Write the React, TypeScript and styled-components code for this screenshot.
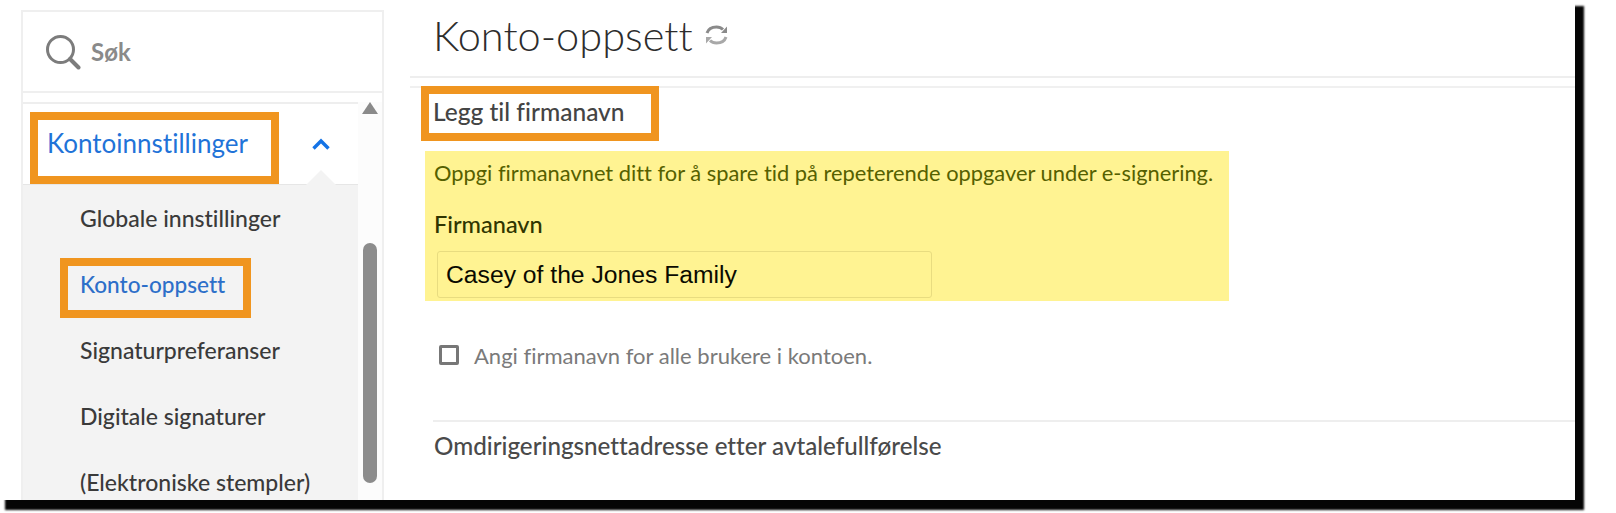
import React from 'react';
import styled, { createGlobalStyle } from 'styled-components';

const GlobalStyle = createGlobalStyle`
  body {
    margin: 0;
    padding: 0;
    background: #fff;
    font-family: Lato, "Open Sans", "Liberation Sans", sans-serif;
    font-variant-ligatures: none;
  }
`;

const Page = styled.div`
  width: 1616px;
  height: 513px;
  overflow: hidden;
`;

const Frame = styled.div`
  display: flex;
  width: 1575px;
  height: 500px;
  background: #fff;
  box-shadow: 7px 8px 2px 2px #050505;
`;

const Clip = styled.div`
  display: flex;
  width: 100%;
  height: 100%;
  overflow: hidden;
  padding: 10px 0 0 21px;
  box-sizing: border-box;
`;

const Sidebar = styled.aside`
  display: flex;
  flex-direction: column;
  flex: none;
  width: 363px;
  box-sizing: border-box;
  border: solid #efefef;
  border-width: 2px 2px 0 2px;
`;

const SearchRow = styled.div`
  display: flex;
  align-items: center;
  gap: 10px;
  flex: none;
  height: 79px;
  padding-left: 22px;
  border-bottom: 2px solid #efefef;
`;

const SearchLabel = styled.span`
  font-size: 24px;
  font-weight: 700;
  color: #8a8a8a;
`;

const MenuArea = styled.div`
  display: flex;
  flex: 1;
  min-height: 0;
  margin-top: 9px;
`;

const Menu = styled.nav`
  flex: 1;
  border-top: 2px solid #eeeeee;
`;

const GroupHeader = styled.div`
  position: relative;
  display: flex;
  align-items: center;
  justify-content: space-between;
  height: 81px;
  box-sizing: border-box;
  padding: 0 27px 0 7px;
  border-bottom: 1px solid #e6e6e6;

  &::after {
    content: '';
    position: absolute;
    right: 22px;
    bottom: -1px;
    border: 15px solid transparent;
    border-top: 0;
    border-bottom-color: #f3f3f3;
  }
`;

const Highlight = styled.div<{ $fill: string }>`
  display: flex;
  align-items: center;
  box-sizing: border-box;
  border: 8px solid #f0951f;
  background: ${({ $fill }) => $fill};
`;

const GroupHighlight = styled(Highlight)`
  align-self: flex-start;
  width: 249px;
  height: 72px;
  margin-top: 8px;
  padding: 0 0 10px 9px;
`;

const GroupTitle = styled.span`
  font-size: 26px;
  color: #1f73d8;
`;

const Submenu = styled.ul`
  list-style: none;
  margin: 0;
  padding: 0 0 0 57px;
  background: #f3f3f3;
  height: 316px;
`;

const SubItem = styled.li`
  display: flex;
  align-items: center;
  height: 66px;
  font-size: 23px;
  font-weight: 500;
  color: #3a3a3a;
  white-space: nowrap;
`;

const ActiveHighlight = styled(Highlight)`
  width: 191px;
  height: 60px;
  margin: 8px 0 0 -20px;
  padding: 0 0 8px 12px;
  font-size: 22.6px;
  color: #2d6fc9;
`;

const ScrollTrack = styled.div`
  display: flex;
  flex-direction: column;
  align-items: center;
  flex: none;
  width: 24px;
  background: #fcfcfc;
`;

const ScrollArrow = styled.div`
  flex: none;
  border: 8px solid transparent;
  border-top: 0;
  border-bottom: 12px solid #8a8a8a;
`;

const ScrollThumb = styled.div`
  flex: none;
  width: 14px;
  height: 240px;
  margin-top: 129px;
  border-radius: 7px;
  background: #8c8c8c;
`;

const Main = styled.main`
  flex: 1;
  min-width: 0;
  margin: -10px 0 0 26px;
`;

const TitleRow = styled.header`
  display: flex;
  align-items: center;
  gap: 11px;
  height: 78px;
  padding: 0 0 6px 23px;
  box-sizing: border-box;
  border-bottom: 2px solid #eeeeee;
`;

const Title = styled.h1`
  margin: 0;
  font-size: 41.5px;
  font-weight: 300;
  color: #2c2c2c;
`;

const SectionRule = styled.div`
  height: 2px;
  margin-top: 8px;
  background: #f0f0f0;
`;

const Section = styled.section`
  padding-left: 11px;
`;

const SectionHighlight = styled(Highlight)`
  width: 238px;
  height: 55px;
  margin-top: -2px;
  padding: 0 0 4px 4px;
`;

const SectionTitle = styled.h2`
  margin: 0;
  font-size: 24.5px;
  font-weight: 500;
  color: #444;
  white-space: nowrap;
`;

const Marked = styled.div`
  width: 804px;
  height: 150px;
  box-sizing: border-box;
  margin: 10px 0 0 4px;
  padding: 8px 0 0 9px;
  background: #fff392;
`;

const Hint = styled.p`
  margin: 0;
  font-size: 21.85px;
  line-height: 28px;
  color: #556000;
  white-space: nowrap;
`;

const FieldLabel = styled.label`
  display: block;
  margin-top: 23px;
  font-size: 23.5px;
  line-height: 28px;
  font-weight: 500;
  color: #2f3500;
`;

const NameInput = styled.div`
  display: flex;
  align-items: center;
  width: 495px;
  height: 47px;
  box-sizing: border-box;
  margin: 13px 0 0 3px;
  padding-left: 8px;
  border: 1px solid #e8dc80;
  border-radius: 3px;
  font-family: "Liberation Sans", Arial, sans-serif;
  font-size: 24.7px;
  color: #0a0a00;
`;

const CheckRow = styled.div`
  display: flex;
  align-items: center;
  gap: 15px;
  height: 28px;
  margin: 40px 0 0 18px;
  font-size: 22px;
  color: #7a7a7a;
`;

const CheckBox = styled.span`
  flex: none;
  width: 20px;
  height: 20px;
  box-sizing: border-box;
  border: 3px solid #777;
  border-radius: 2px;
`;

const Divider = styled.div`
  height: 2px;
  margin: 51px 0 0 12px;
  background: #eeeeee;
`;

const NextTitle = styled.h2`
  margin: 9px 0 0 13px;
  font-size: 24.2px;
  line-height: 30px;
  font-weight: 500;
  color: #4a4a4a;
`;

const SearchIcon = () => (
  <svg width="36" height="36" viewBox="0 0 36 36" fill="none" stroke="#7c7c7c" strokeLinecap="round">
    <circle cx="15.5" cy="15.5" r="13" strokeWidth="3" />
    <path d="M25 25 L33.5 33.5" strokeWidth="4" />
  </svg>
);

const ChevronUp = () => (
  <svg width="20" height="14" viewBox="0 0 20 14" fill="none" stroke="#1473e6" strokeWidth="3.4">
    <path d="M2.5 11.5 L10 4 L17.5 11.5" />
  </svg>
);

const RefreshIcon = () => (
  <svg width="25" height="24" viewBox="0 0 25 24" fill="none" strokeWidth="3">
    <path d="M3 10 C4.5 5.5 8 4 12.5 4 C15.5 4 17.5 5 19 6.5" stroke="#8a8a8a" />
    <path d="M22 14 C20.5 18.5 17 20 12.5 20 C9.5 20 7.5 19 6 17.5" stroke="#a8a8a8" />
    <path d="M23 3.5 V10 H17 Z" fill="#8a8a8a" />
    <path d="M2 20.5 V14 H8 Z" fill="#a8a8a8" />
  </svg>
);

const subItems = ['Signaturpreferanser', 'Digitale signaturer', '(Elektroniske stempler)'];

export default function App() {
  return (
    <Page>
      <GlobalStyle />
      <Frame>
        <Clip>
          <Sidebar>
            <SearchRow>
              <SearchIcon />
              <SearchLabel>Søk</SearchLabel>
            </SearchRow>
            <MenuArea>
              <Menu>
                <GroupHeader>
                  <GroupHighlight $fill="#fff">
                    <GroupTitle>Kontoinnstillinger</GroupTitle>
                  </GroupHighlight>
                  <ChevronUp />
                </GroupHeader>
                <Submenu>
                  <SubItem>Globale innstillinger</SubItem>
                  <SubItem>
                    <ActiveHighlight $fill="#f3f3f3">Konto-oppsett</ActiveHighlight>
                  </SubItem>
                  {subItems.map((item) => (
                    <SubItem key={item}>{item}</SubItem>
                  ))}
                </Submenu>
              </Menu>
              <ScrollTrack>
                <ScrollArrow />
                <ScrollThumb />
              </ScrollTrack>
            </MenuArea>
          </Sidebar>
          <Main>
            <TitleRow>
              <Title>Konto-oppsett</Title>
              <RefreshIcon />
            </TitleRow>
            <SectionRule />
            <Section>
              <SectionHighlight $fill="#fff">
                <SectionTitle>Legg til firmanavn</SectionTitle>
              </SectionHighlight>
              <Marked>
                <Hint>Oppgi firmanavnet ditt for å spare tid på repeterende oppgaver under e-signering.</Hint>
                <FieldLabel>Firmanavn</FieldLabel>
                <NameInput>Casey of the Jones Family</NameInput>
              </Marked>
              <CheckRow>
                <CheckBox />
                Angi firmanavn for alle brukere i kontoen.
              </CheckRow>
              <Divider />
              <NextTitle>Omdirigeringsnettadresse etter avtalefullførelse</NextTitle>
            </Section>
          </Main>
        </Clip>
      </Frame>
    </Page>
  );
}
